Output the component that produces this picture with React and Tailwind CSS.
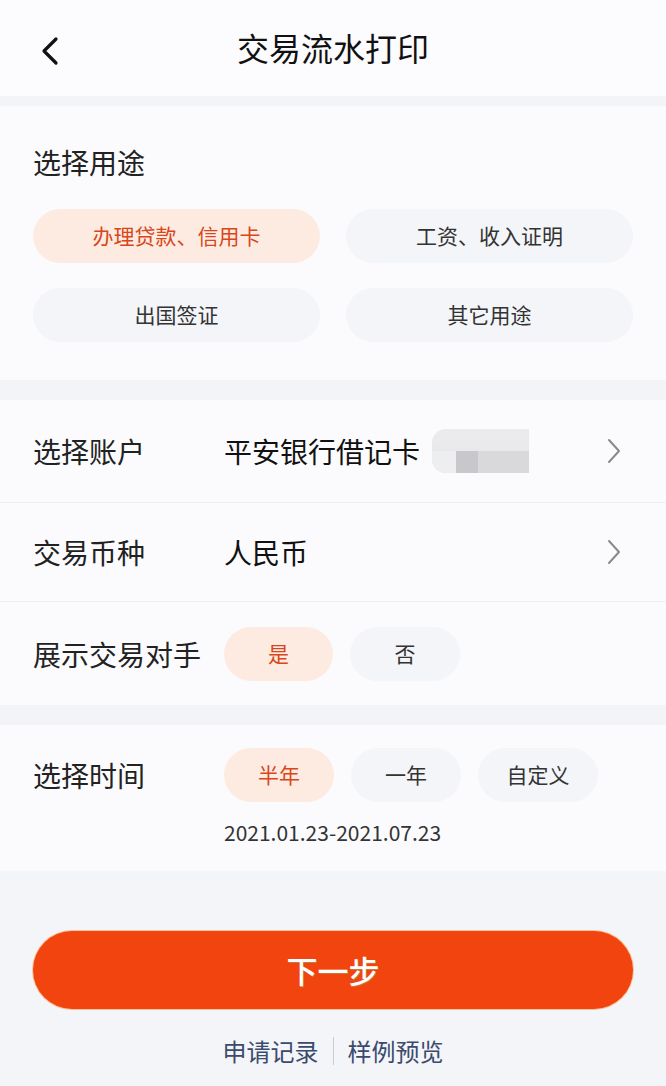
import React, { useState } from 'react';

const font = { fontFamily: '"Noto Sans CJK SC", "Noto Sans", sans-serif' };

const Chip = ({ active, children, className = '', onClick }) => (
  <button
    onClick={onClick}
    className={`h-[54px] rounded-full flex items-center justify-center text-[21px] ${
      active ? 'bg-[#fdebe2] text-[#d8461a]' : 'bg-[#f4f5f8] text-[#333]'
    } ${className}`}
  >
    {children}
  </button>
);

const ChevronRight = () => (
  <svg width="16" height="26" viewBox="0 0 16 26" fill="none">
    <polyline points="3,2 13,13 3,24" stroke="#8a8a8e" strokeWidth="2" strokeLinecap="round" strokeLinejoin="round" />
  </svg>
);

const App = () => {
  const [purpose, setPurpose] = useState(0);
  const [showParty, setShowParty] = useState(true);
  const [period, setPeriod] = useState(0);
  const purposes = ['办理贷款、信用卡', '工资、收入证明', '出国签证', '其它用途'];

  return (
    <div className="w-[666px] h-[1086px] bg-[#f3f4f7] flex flex-col overflow-hidden" style={font}>
      {/* Header */}
      <div className="h-[96px] bg-[#fcfcfe] flex items-center relative shrink-0">
        <button className="absolute left-[38px] top-[36px]">
          <svg width="24" height="30" viewBox="0 0 24 30" fill="none">
            <polyline points="18,3 6,15 18,27" stroke="#111" strokeWidth="3.2" strokeLinecap="round" strokeLinejoin="round" />
          </svg>
        </button>
        <h1 className="w-full text-center text-[32px] text-[#111] leading-none -mt-[2px]">交易流水打印</h1>
      </div>

      {/* Purpose */}
      <div className="mt-[10px] bg-[#fbfbfd] px-[33px] pt-[37px] pb-[38px] shrink-0">
        <div className="text-[28px] text-[#222] leading-[38px]">选择用途</div>
        <div className="grid grid-cols-2 gap-x-[26px] gap-y-[25px] mt-[28px]">
          {purposes.map((p, i) => (
            <Chip key={p} active={purpose === i} onClick={() => setPurpose(i)}>
              {p}
            </Chip>
          ))}
        </div>
      </div>

      {/* Account */}
      <div className="mt-[20px] bg-[#fbfbfd] shrink-0">
        <div className="h-[103px] flex items-center pl-[33px] pr-[44px] border-b border-[#f0f0f3]">
          <span className="w-[191px] text-[28px] text-[#222]">选择账户</span>
          <span className="text-[28px] text-[#111]">平安银行借记卡</span>
          <div className="ml-[12px] w-[97px] h-[44px] rounded-l-[14px] bg-gradient-to-b from-[#ebebee] via-[#e9e9ec] to-[#dcdce0] flex items-end overflow-hidden">
            <div className="w-[24px] h-[22px] bg-[#eceef0]"></div>
            <div className="w-[22px] h-[22px] bg-[#c8c8cc]"></div>
            <div className="flex-1 h-[22px] bg-[#d9d9dc]"></div>
          </div>
          <div className="ml-auto"><ChevronRight /></div>
        </div>
        <div className="h-[99px] flex items-center pl-[33px] pr-[44px] border-b border-[#f0f0f3]">
          <span className="w-[191px] text-[28px] text-[#222]">交易币种</span>
          <span className="text-[28px] text-[#111]">人民币</span>
          <div className="ml-auto"><ChevronRight /></div>
        </div>
        <div className="h-[103px] flex items-center pl-[33px]">
          <span className="w-[191px] text-[28px] text-[#222]">展示交易对手</span>
          <div className="flex gap-[17px]">
            <Chip active={showParty} className="w-[109px]" onClick={() => setShowParty(true)}>是</Chip>
            <Chip active={!showParty} className="w-[110px]" onClick={() => setShowParty(false)}>否</Chip>
          </div>
        </div>
      </div>

      {/* Period */}
      <div className="mt-[20px] bg-[#fbfbfd] pl-[33px] pt-[23px] pb-[24px] shrink-0">
        <div className="flex items-center">
          <span className="w-[191px] text-[28px] text-[#222]">选择时间</span>
          <div className="flex gap-[17px]">
            {['半年', '一年', '自定义'].map((t, i) => (
              <Chip
                key={t}
                active={period === i}
                className={i === 2 ? 'w-[120px]' : 'w-[110px]'}
                onClick={() => setPeriod(i)}
              >
                {t}
              </Chip>
            ))}
          </div>
        </div>
        <div className="ml-[191px] mt-[15px] text-[21px] leading-[30px] text-[#333]">2021.01.23-2021.07.23</div>
      </div>

      {/* Bottom */}
      <div className="flex-1 bg-[#f4f5f8] px-[33px] pt-[60px] flex flex-col items-center">
        <button
          className="w-full h-[78px] rounded-full bg-[#f2440e] text-white text-[31px] font-medium shadow-[0_0_0_1px_#f9c49a]"
          style={{ textShadow: '1px 1px 0 #c97a3a' }}
        >
          下一步
        </button>
        <div className="mt-[24px] flex items-center text-[24px] text-[#3b4b6e]">
          <span>申请记录</span>
          <span className="mx-[14px] w-px h-[28px] bg-[#c8ccd4]"></span>
          <span>样例预览</span>
        </div>
      </div>
    </div>
  );
};

export default App;
